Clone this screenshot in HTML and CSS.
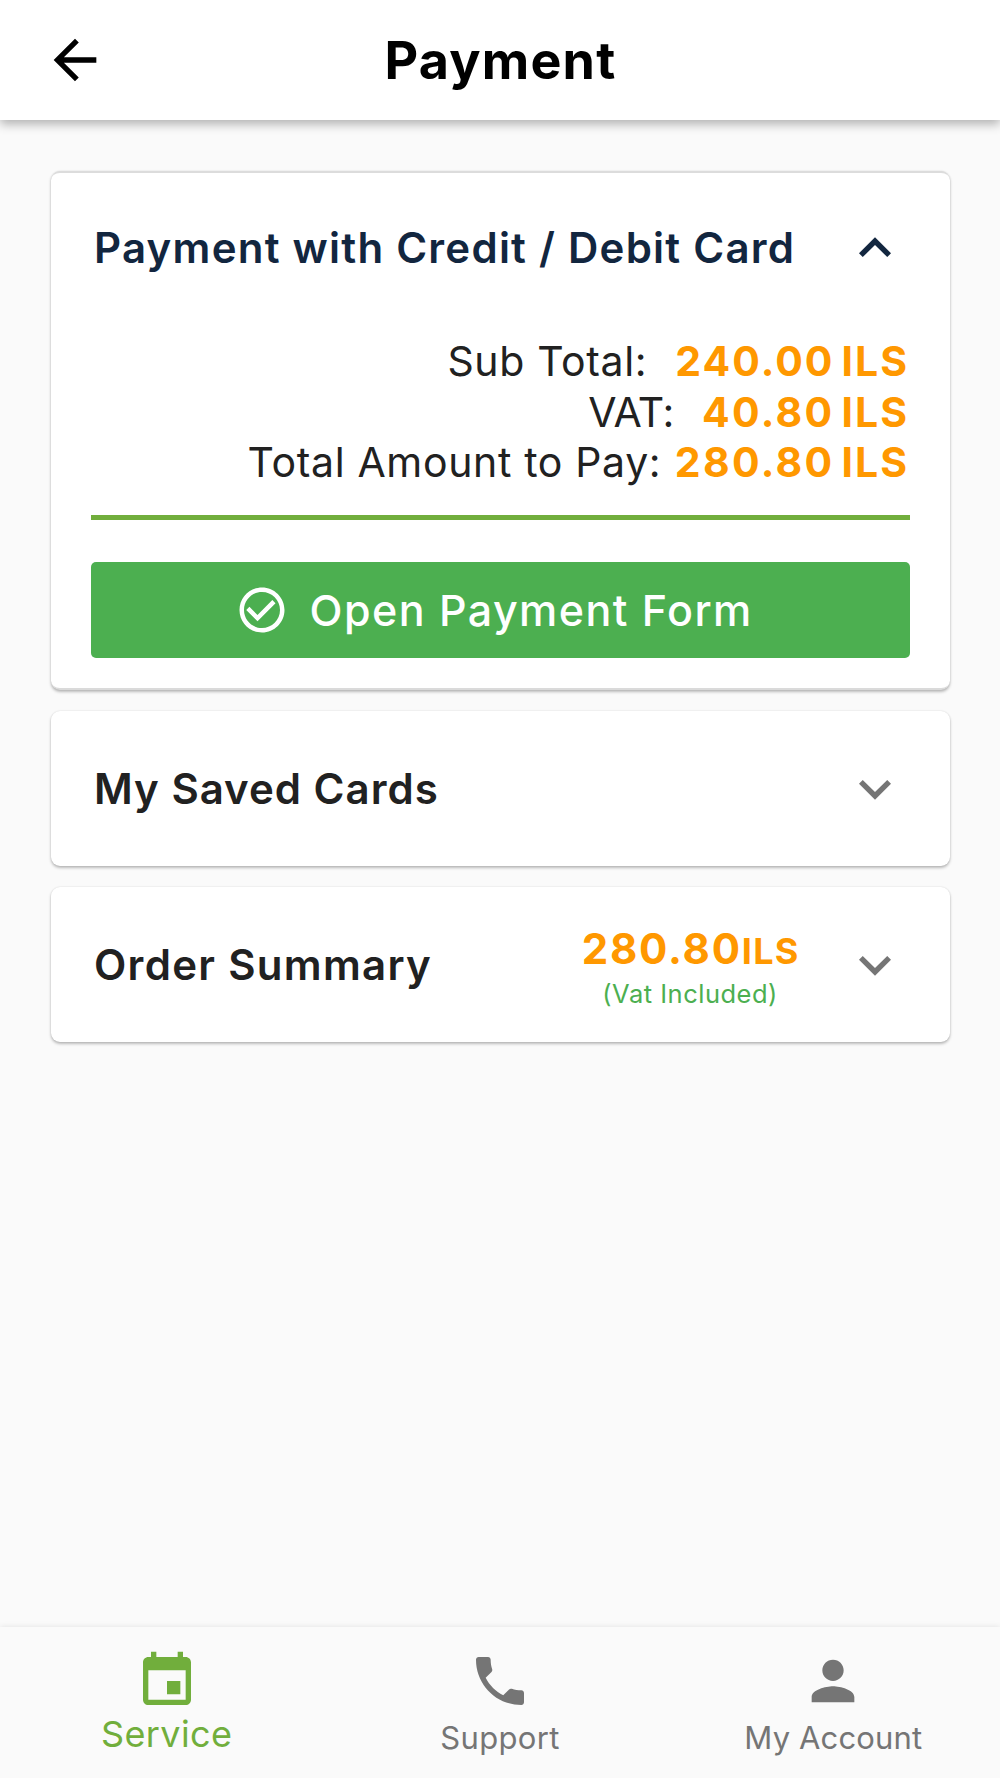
FILE: index.html
```html
<!DOCTYPE html>
<html lang="en">
<head>
<meta charset="utf-8">
<title>Payment</title>
<link rel="stylesheet" href="styles.css">
</head>
<body>
<div class="screen">
  <header class="app-bar">
    <svg class="icon back" viewBox="0 0 24 24"><path d="M20 11H7.83l5.59-5.59L12 4l-8 8 8 8 1.41-1.41L7.83 13H20v-2z"/></svg>
    <h1 class="title">Payment</h1>
  </header>
  <main class="content">
    <section class="card card-open">
      <div class="card-head">
        <h2 class="card-title navy">Payment with Credit / Debit Card</h2>
        <svg class="icon chevron navy" viewBox="0 0 24 24"><path d="M12 8l-6 6 1.41 1.41L12 10.83l4.59 4.58L18 14z"/></svg>
      </div>
      <div class="card-body">
        <div class="totals">
          <div class="line"><span class="label spaced">Sub Total:</span><span class="amount">240.00</span><span class="unit">ILS</span></div>
          <div class="line"><span class="label vat spaced">VAT:</span><span class="amount sum">40.80</span><span class="unit">ILS</span></div>
          <div class="line"><span class="label">Total Amount to Pay:</span><span class="amount sum">280.80</span><span class="unit">ILS</span></div>
        </div>
        <button class="pay">
          <svg class="check" viewBox="0 0 24 24"><path d="M16.59 7.58L10 14.17l-3.59-3.58L5 12l5 5 8-8zM12 2C6.48 2 2 6.48 2 12s4.480 10 10 10 10-4.480 10-10S17.520 2 12 2zm0 18c-4.420 0-8-3.580-8-8s3.580-8 8-8 8 3.580 8 8-3.580 8-8 8z"/></svg>
          <span>Open Payment Form</span>
        </button>
      </div>
    </section>
    <section class="card card-closed">
      <h2 class="card-title">My Saved Cards</h2>
      <svg class="icon chevron" viewBox="0 0 24 24"><path d="M16.59 8.59L12 13.17 7.41 8.59 6 10l6 6 6-6z"/></svg>
    </section>
    <section class="card card-closed">
      <h2 class="card-title wide">Order Summary</h2>
      <div class="summary">
        <div class="summary-sum"><span class="amount">280.80</span><span class="unit small">ILS</span></div>
        <div class="summary-note">(Vat Included)</div>
      </div>
      <svg class="icon chevron" viewBox="0 0 24 24"><path d="M16.59 8.59L12 13.17 7.41 8.59 6 10l6 6 6-6z"/></svg>
    </section>
  </main>
  <nav class="tabs">
    <a class="tab active">
      <svg class="icon" viewBox="0 0 24 24"><path d="M17 12h-5v5h5v-5zM16 1v2H8V1H6v2H5c-1.110 0-1.990.9-1.990 2L3 19c0 1.100.890 2 2 2h14c1.100 0 2-.9 2-2V5c0-1.100-.9-2-2-2h-1V1h-2zm3 18H5V8h14v11z"/></svg>
      <span>Service</span>
    </a>
    <a class="tab">
      <svg class="icon" viewBox="0 0 24 24"><path d="M6.620 10.790c1.440 2.830 3.760 5.140 6.590 6.590l2.200-2.200c.27-.27.670-.36 1.020-.24 1.120.37 2.330.57 3.570.57.55 0 1 .45 1 1V20c0 .55-.45 1-1 1-9.390 0-17-7.610-17-17 0-.55.45-1 1-1h3.500c.55 0 1 .45 1 1 0 1.250.2 2.450.57 3.570.11.35.03.740-.25 1.020l-2.200 2.200z"/></svg>
      <span>Support</span>
    </a>
    <a class="tab">
      <svg class="icon" viewBox="0 0 24 24"><path d="M12 12c2.210 0 4-1.790 4-4s-1.790-4-4-4-4 1.790-4 4 1.790 4 4 4zm0 2c-2.670 0-8 1.340-8 4v2h16v-2c0-2.660-5.330-4-8-4z"/></svg>
      <span>My Account</span>
    </a>
  </nav>
</div>
</body>
</html>
```
FILE: styles.css
```css
* { box-sizing: border-box; margin: 0; padding: 0; }
body { font-family: Inter, "Liberation Sans", sans-serif; background: #fafafa; color: #212121; }
.screen { height: 1778px; display: flex; flex-direction: column; }
.icon { width: 64px; height: 64px; fill: currentColor; flex: none; }

.app-bar { height: 120px; display: grid; grid-template-columns: 107px 1fr 107px; align-items: center; background: #fff; color: #000; box-shadow: 0 4px 10px rgba(0,0,0,.3); }
.back { margin-left: 43px; }
.title { font-size: 52px; font-weight: 700; text-align: center; line-height: 60px; letter-spacing: 1.2px; padding: 1px 0 0 1px; }

.content { flex: 1; padding: 51px 50.5px 0; display: flex; flex-direction: column; gap: 21px; }
.card { background: #fff; border-radius: 9px; box-shadow: 0 2px 3px rgba(0,0,0,.25), 0 0 2px rgba(0,0,0,.12); }
.card-open { height: 519px; border-top: 2px solid #dcdcdc; border-bottom: 2px solid #dadada; }
.card-head { height: 150px; display: flex; align-items: center; justify-content: space-between; padding: 0 43px 0 43.5px; }
.card-title { font-size: 42px; font-weight: 600; line-height: 50px; white-space: nowrap; letter-spacing: 1px; }
.card-title.wide { letter-spacing: 1.3px; }
.card-head .card-title { letter-spacing: 1.24px; }
.navy { color: #12263f; }
.chevron { color: #757575; }
.chevron.navy { color: #12263f; }

.card-body { padding: 13px 40px 0; }
.totals { border-bottom: 5px solid #71ae3c; height: 184px; display: flex; flex-direction: column; }
.line { display: flex; justify-content: flex-end; font-size: 41px; line-height: 50.6px; padding-right: .5px; }
.label { letter-spacing: .65px; margin-right: 13.5px; }
.label.spaced { margin-right: 28px; }
.label.vat { letter-spacing: -.4px; }
.amount, .unit { color: #ff9800; font-weight: 700; letter-spacing: 2px; }
.amount.sum { letter-spacing: 2.3px; }
.unit { font-size: 41px; margin-left: 7px; }

.pay { width: 100%; height: 96px; margin-top: 42px; border: 0; border-radius: 5px; background: #4caf50; color: #fff; display: flex; align-items: center; padding-left: 144px; gap: 21px; font: 500 43px/50px Inter, sans-serif; letter-spacing: 1.45px; }
.check { width: 54px; height: 54px; fill: #fff; }

.card-closed { height: 155px; display: flex; align-items: center; padding: 0 43px 0 43.5px; justify-content: space-between; }
.summary { margin: 2px 43px 0 auto; }
.summary-sum { display: flex; align-items: baseline; font-size: 42px; line-height: 53px; }
.summary-sum .amount { letter-spacing: 1.8px; }
.unit.small { font-size: 36px; margin-left: 0; letter-spacing: 1.2px; }
.summary-note { color: #4caf50; font-size: 25.5px; line-height: 31px; text-align: center; letter-spacing: .5px; padding-right: 1px; }

.tabs { height: 151px; display: grid; grid-template-columns: repeat(3, 1fr); box-shadow: 0 0 6px rgba(0,0,0,.1); }
.tab { display: flex; flex-direction: column; align-items: center; color: #757575; font-size: 31px; line-height: 50px; letter-spacing: .35px; padding-top: 22px; }
.tab:last-child { letter-spacing: .15px; }
.tab.active { color: #71ae3c; font-size: 36px; line-height: 43px; }
```
